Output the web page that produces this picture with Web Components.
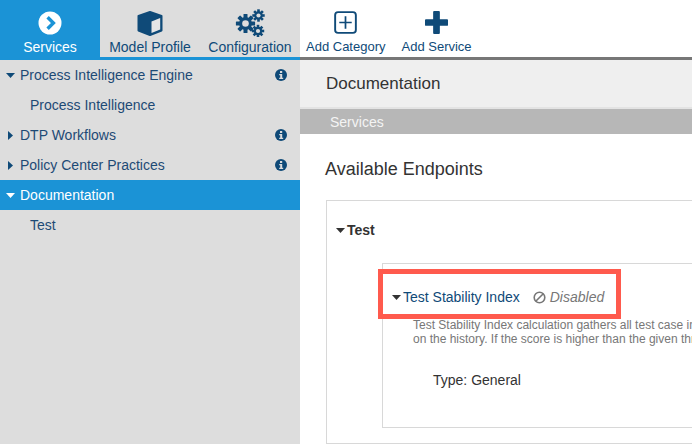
<!DOCTYPE html>
<html>
<head>
<meta charset="utf-8">
<title>Services</title>
<style>
  html, body { margin: 0; height: 100%; overflow: hidden; background: #fff; }
  body { font-family: "Liberation Sans", Arial, sans-serif; }
</style>
</head>
<body>
<app-shell>
  <tool-bar slot="top"></tool-bar>
  <side-nav slot="side"></side-nav>
  <doc-panel slot="main"></doc-panel>
</app-shell>

<script>
const COG_BIG = `<circle r="6.4"/><rect x="-2" y="-9.6" width="4" height="19.2" rx=".6"/><rect x="-2" y="-9.6" width="4" height="19.2" rx=".6" transform="rotate(45)"/><rect x="-2" y="-9.6" width="4" height="19.2" rx=".6" transform="rotate(90)"/><rect x="-2" y="-9.6" width="4" height="19.2" rx=".6" transform="rotate(135)"/><circle r="3.3" fill="#ddd"/>`
const COG_SMALL = `<circle r="4.2"/><rect x="-1.3" y="-6.2" width="2.6" height="12.4"/><rect x="-1.3" y="-6.2" width="2.6" height="12.4" transform="rotate(45)"/><rect x="-1.3" y="-6.2" width="2.6" height="12.4" transform="rotate(90)"/><rect x="-1.3" y="-6.2" width="2.6" height="12.4" transform="rotate(135)"/><circle r="2.1" fill="#ddd"/>`

const ICONS = {
  services: `<svg width="24" height="24" viewBox="0 0 24 24"><circle cx="12" cy="12" r="11.5" fill="#fff"/><path d="M9.6 6.2 15.4 12l-5.8 5.8" fill="none" stroke="#1b93d6" stroke-width="3.4"/></svg>`,
  cube: `<svg width="26" height="26" viewBox="0 0 26 26"><path d="M13 2 24.500 6v14.500L13 25 1.500 20.500V6Z" fill="#0f4a78" stroke="#0f4a78" stroke-width="2" stroke-linejoin="round"/><path d="M14.500 11.500 23.200 8v11.500l-8.700 3.500Z" fill="#e6e6e6"/></svg>`,
  cogs: `<svg width="32" height="28" viewBox="0 0 32 28" fill="#0f4a78">
    <g transform="translate(11.5 14.5)">${COG_BIG}</g>
    <g transform="translate(24.5 6.5)">${COG_SMALL}</g>
    <g transform="translate(24 22)">${COG_SMALL}</g>
  </svg>`,
  plusBox: `<svg width="23" height="23" viewBox="0 0 24 24"><rect x="1.2" y="1.2" width="21.6" height="21.6" rx="3" fill="none" stroke="#0f4a78" stroke-width="2"/><path d="M12 5.500v13M5.500 12h13" stroke="#0f4a78" stroke-width="1.8"/></svg>`,
  plus: `<svg width="23" height="23" viewBox="0 0 24 24"><path d="M9.500 0h5a1 1 0 0 1 1 1v7.500H23a1 1 0 0 1 1 1v5a1 1 0 0 1-1 1h-7.500V23a1 1 0 0 1-1 1h-5a1 1 0 0 1-1-1v-7.500H1a1 1 0 0 1-1-1v-5a1 1 0 0 1 1-1h7.500V1a1 1 0 0 1 1-1Z" fill="#0f4a78"/></svg>`,
  info: `<svg width="12" height="12" viewBox="0 0 12 12"><circle cx="6" cy="6" r="6" fill="#0f4a78"/><rect x="5" y="2" width="2.2" height="2" fill="#ddd"/><path d="M4.200 5h3v3.800h1V10H4.200V8.800h1V6.200h-1Z" fill="#ddd"/></svg>`,
  ban: `<svg width="13" height="13" viewBox="0 0 13 13"><circle cx="6.500" cy="6.500" r="5.300" fill="none" stroke="#777" stroke-width="1.600"/><path d="M3 10 10 3" stroke="#777" stroke-width="1.600"/></svg>`
}

class AppShell extends HTMLElement {
  constructor () {
    super()
    this.attachShadow({ mode: 'open' }).innerHTML = /* html */`
      <style>
        :host { display: grid; grid-template-columns: 300px 1fr; grid-template-rows: 60px 1fr; width: 692px; height: 444px; overflow: hidden; }
        .top { grid-column: 1 / 3; }
      </style>
      <div class="top"><slot name="top"></slot></div>
      <slot name="side"></slot>
      <slot name="main"></slot>
    `
  }
}

class ToolItem extends HTMLElement {
  constructor () {
    super()
    this.attachShadow({ mode: 'open' }).innerHTML = /* html */`
      <style>
        :host { display: flex; flex-direction: column; align-items: center; height: 57px; box-sizing: border-box; padding-top: var(--top, 9px); color: #0f4a78; font-size: var(--size, 14px); white-space: nowrap; }
        :host([active]) { background: #1b93d6; color: #fff; height: 60px; }
        .icon { display: flex; align-items: center; justify-content: center; height: var(--icon-h, 27px); }
        .label { margin-top: var(--gap, 3px); line-height: 16px; }
      </style>
      <div class="icon"><slot name="icon"></slot></div>
      <div class="label"><slot></slot></div>
    `
  }
}

class ToolBar extends HTMLElement {
  constructor () {
    super()
    this.attachShadow({ mode: 'open' }).innerHTML = /* html */`
      <style>
        :host { display: flex; height: 60px; }
        .left { display: grid; grid-template-columns: repeat(3, 100px); width: 300px; height: 60px; box-sizing: border-box; background: #ddd; border-bottom: 3px solid #1b93d6; }
        .right { flex: 1; display: flex; gap: 16px; height: 60px; box-sizing: border-box; padding-left: 6px; border-bottom: 3px solid #777; }
        .small { --size: 13px; --top: 11px; --icon-h: 23px; --gap: 5px; }
      </style>
      <div class="left">
        <tool-item active>${ICONS.services.replace('<svg', '<svg slot="icon"')}Services</tool-item>
        <tool-item>${ICONS.cube.replace('<svg', '<svg slot="icon"')}Model Profile</tool-item>
        <tool-item>${ICONS.cogs.replace('<svg', '<svg slot="icon"')}Configuration</tool-item>
      </div>
      <div class="right">
        <tool-item class="small">${ICONS.plusBox.replace('<svg', '<svg slot="icon"')}Add Category</tool-item>
        <tool-item class="small">${ICONS.plus.replace('<svg', '<svg slot="icon"')}Add Service</tool-item>
      </div>
    `
  }
}

class NavRow extends HTMLElement {
  constructor () {
    super()
    const caret = this.getAttribute('caret')
    const shape = caret === 'down' ? 'M0 2h9L4.500 7Z' : caret === 'right' ? 'M2 0l5 4.500L2 9Z' : ''
    this.attachShadow({ mode: 'open' }).innerHTML = /* html */`
      <style>
        :host { display: flex; align-items: center; height: 30px; padding: 0 13px 0 6px; color: #1d4a75; font-size: 14px; white-space: nowrap; }
        :host([selected]) { background: #1b93d6; color: #fff; }
        :host([child]) { padding-left: 30px; }
        svg.caret { width: 9px; height: 9px; margin-right: 5px; fill: currentColor; flex: none; }
        :host(:not([selected])) svg.caret { fill: #0f4a78; }
        .text { flex: 1; }
      </style>
      ${shape ? `<svg class="caret" viewBox="0 0 9 9"><path d="${shape}"/></svg>` : ''}
      <span class="text"><slot></slot></span>
      ${this.hasAttribute('info') ? ICONS.info : ''}
    `
  }
}

class SideNav extends HTMLElement {
  constructor () {
    super()
    this.attachShadow({ mode: 'open' }).innerHTML = /* html */`
      <style>
        :host { display: block; background: #ddd; }
      </style>
      <nav-row caret="down" info>Process Intelligence Engine</nav-row>
      <nav-row child>Process Intelligence</nav-row>
      <nav-row caret="right" info>DTP Workflows</nav-row>
      <nav-row caret="right" info>Policy Center Practices</nav-row>
      <nav-row caret="down" selected>Documentation</nav-row>
      <nav-row child>Test</nav-row>
    `
  }
}

class EndpointCard extends HTMLElement {
  constructor () {
    super()
    this.attachShadow({ mode: 'open' }).innerHTML = /* html */`
      <style>
        :host { display: block; position: relative; margin-left: 55px; height: 165px; box-sizing: border-box; border: 1px solid #d8d8d8; border-right: 0; width: 340px; padding: 23px 0 0 9px; }
        .title { display: flex; align-items: center; height: 20px; color: #0f4a78; font-size: 14px; white-space: nowrap; }
        .title svg.caret { width: 9px; height: 9px; margin-right: 2px; fill: #333; }
        .state { display: flex; align-items: center; gap: 4px; margin-left: 13px; color: #777; font-style: italic; }
        .desc { margin: 11px 0 0 21px; color: #777; font-size: 12px; line-height: 14px; white-space: nowrap; }
        .type { margin: 26px 0 0 41px; color: #333; font-size: 14px; line-height: 16px; }
        .mark { position: absolute; left: -5px; top: 5px; width: 243px; height: 50px; box-sizing: border-box; border: 5px solid #ff5a4d; }
      </style>
      <div class="title">
        <svg class="caret" viewBox="0 0 9 9"><path d="M0 2h9L4.500 7Z"/></svg>
        Test Stability Index
        <span class="state">${ICONS.ban} Disabled</span>
      </div>
      <div class="desc">Test Stability Index calculation gathers all test case in<br>on the history. If the score is higher than the given thr</div>
      <div class="type">Type: General</div>
      <div class="mark"></div>
    `
  }
}

class DocPanel extends HTMLElement {
  constructor () {
    super()
    this.attachShadow({ mode: 'open' }).innerHTML = /* html */`
      <style>
        :host { display: block; overflow: hidden; min-width: 0; }
        header { height: 47px; display: flex; align-items: center; padding-left: 26px; background: #efefef; border-bottom: 2px solid #e3e3e3; color: #333; font-size: 17px; }
        .bar { height: 25px; line-height: 27px; padding-left: 30px; background: #b7b7b7; color: #f4f4f4; font-size: 14px; }
        h2 { margin: 0; padding: 25px 0 0 25px; height: 41px; font-weight: 400; font-size: 18px; line-height: 20px; color: #333; }
        .outer { margin-left: 26px; height: 244px; box-sizing: border-box; border: 1px solid #d8d8d8; border-right: 0; }
        .group { display: flex; align-items: center; height: 20px; margin: 19px 0 23px 9px; font-weight: 700; font-size: 14px; color: #333; }
        .group svg { width: 9px; height: 9px; margin-right: 2px; fill: #333; }
      </style>
      <header>Documentation</header>
      <div class="bar">Services</div>
      <h2>Available Endpoints</h2>
      <div class="outer">
        <div class="group"><svg viewBox="0 0 9 9"><path d="M0 2h9L4.500 7Z"/></svg>Test</div>
        <endpoint-card></endpoint-card>
      </div>
    `
  }
}

customElements.define('app-shell', AppShell)
customElements.define('tool-item', ToolItem)
customElements.define('tool-bar', ToolBar)
customElements.define('nav-row', NavRow)
customElements.define('side-nav', SideNav)
customElements.define('endpoint-card', EndpointCard)
customElements.define('doc-panel', DocPanel)
</script>
</body>
</html>
